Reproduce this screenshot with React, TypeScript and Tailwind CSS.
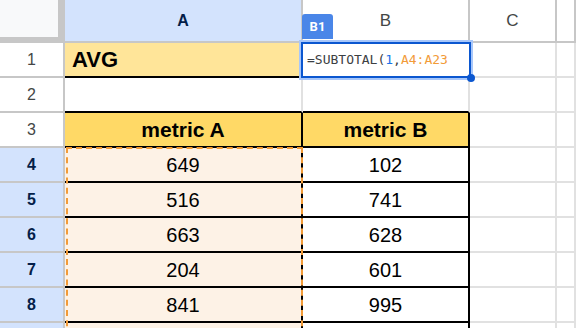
const rows = [
  { n: 4, v: [649, 102] },
  { n: 5, v: [516, 741] },
  { n: 6, v: [663, 628] },
  { n: 7, v: [204, 601] },
  { n: 8, v: [841, 995] },
];

const grid = "border-r-2 border-b-2 border-[#e1e1e1]";
const head = "border-r-2 border-b-2 border-[#c7c7c7]";

function RowHead({ n, hl }: { n?: number; hl?: boolean }) {
  return (
    <div
      className={`${head} flex items-center justify-center text-[16px] ${
        hl ? "bg-[#d3e3fd] font-bold text-[#041e49]" : "bg-white text-[#444746]"
      }`}
    >
      {n}
    </div>
  );
}

export default function App() {
  return (
    <div
      className="relative h-[328px] w-[576px] overflow-hidden bg-white"
      style={{ fontFamily: '"Liberation Sans", Arial, sans-serif' }}
    >
      <div className="grid grid-cols-[65px_238px_167px_87px_1fr] grid-rows-[43px_repeat(9,35px)]">
        {/* column headers */}
        <div className="bg-[#c7c7c7]">
          <div className="h-[37px] w-[58px] bg-[#f8f9fa]" />
        </div>
        <div className={`${head} flex items-center justify-center bg-[#d3e3fd] text-[16px] font-bold text-[#041e49]`}>A</div>
        <div className={`${head} flex items-center justify-center text-[17px] text-[#444746]`}>B</div>
        <div className={`${head} flex items-center justify-center text-[17px] text-[#444746]`}>C</div>
        <div className={head} />

        {/* row 1 */}
        <RowHead n={1} />
        <div className="flex items-center border-r-2 border-b-2 border-r-[#e1e1e1] border-b-black bg-[#ffe599] pl-[7px] text-[22px] font-bold text-black">
          AVG
        </div>
        <div className={grid} />
        <div className={grid} />
        <div className={grid} />

        {/* row 2 */}
        <RowHead n={2} />
        <div className="border-r-2 border-b-2 border-r-[#e1e1e1] border-b-black" />
        <div className="border-r-2 border-b-2 border-r-[#e1e1e1] border-b-black" />
        <div className={grid} />
        <div className={grid} />

        {/* row 3 */}
        <RowHead n={3} />
        <div className="flex items-center justify-center border-r-2 border-b-2 border-black bg-[#ffd966] text-[21px] font-bold text-black">
          metric A
        </div>
        <div className="flex items-center justify-center border-r-2 border-b-2 border-black bg-[#ffd966] text-[21px] font-bold text-black">
          metric B
        </div>
        <div className={grid} />
        <div className={grid} />

        {rows.map((r) => (
          <div key={r.n} className="contents">
            <RowHead n={r.n} hl />
            <div className="flex items-center justify-center border-r-2 border-b-2 border-black bg-[#fdf2e6] text-[20px] text-black">
              {r.v[0]}
            </div>
            <div className="flex items-center justify-center border-r-2 border-b-2 border-black text-[20px] text-black">
              {r.v[1]}
            </div>
            <div className={grid} />
            <div className={grid} />
          </div>
        ))}

        {/* row 9, only its top edge shows */}
        <RowHead hl />
        <div className="border-r-2 border-black bg-[#fdf2e6]" />
        <div className="border-r-2 border-black" />
        <div className="border-r-2 border-[#e1e1e1]" />
        <div className="border-r-2 border-[#e1e1e1]" />
      </div>

      {/* A4:A23 range highlight */}
      <div className="absolute left-[66px] top-[147px] h-[220px] w-[237px] border-2 border-dashed border-[#f29b38]" />

      {/* B1 selection */}
      <div className="absolute left-[301px] top-[42px] flex h-[36px] w-[170px] items-center border-2 border-[#0b57d0] bg-white pl-[4px] outline outline-2 outline-[#a8c7fa]">
        <span
          className="text-[13px] text-[#3c4043]"
          style={{ fontFamily: '"DejaVu Sans Mono", "Liberation Mono", monospace' }}
        >
          =SUBTOTAL(<span className="text-[#1a73e8]">1</span>,<span className="text-[#f29b38]">A4:A23</span>
        </span>
      </div>
      <div className="absolute left-[467px] top-[74px] h-[8px] w-[8px] rounded-full bg-[#0b57d0]" />

      {/* B1 badge */}
      <div
        className="absolute left-[302px] top-[14px] flex h-[25px] w-[31px] items-center justify-center rounded-t-[3px] bg-[#4a86e8] text-[13px] font-bold text-white"
        style={{ fontFamily: "Roboto, sans-serif" }}
      >
        B1
      </div>
    </div>
  );
}
